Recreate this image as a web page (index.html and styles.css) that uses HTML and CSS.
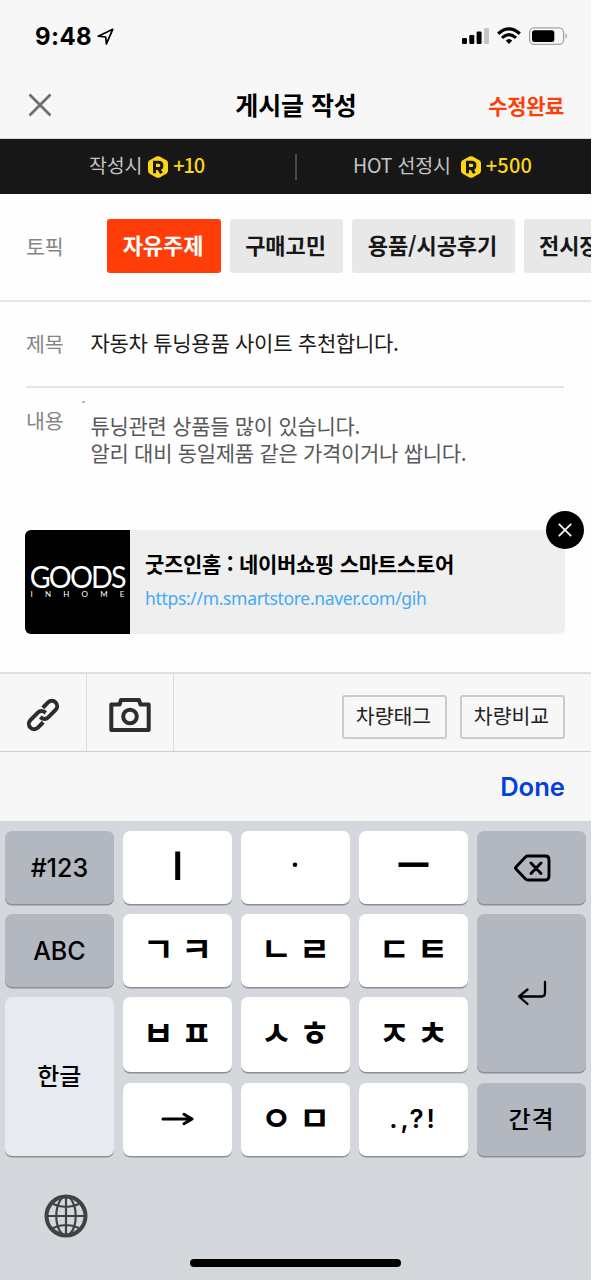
FILE: index.html
```html
<!DOCTYPE html>
<html lang="ko">
<head>
<meta charset="utf-8">
<title>게시글 작성</title>
<link rel="stylesheet" href="styles.css">
</head>
<body>
<div class="screen">
  <header class="top">
    <div class="status">
      <span class="clock">9:48</span>
      <svg class="loc" width="18" height="18" viewBox="0 0 18 18"><path d="M1.200 8.200 15.700 1.300 9.400 15.900 8.700 9Z" fill="none" stroke="#000" stroke-width="1.700" stroke-linejoin="round"/></svg>
      <svg class="indicators" width="108" height="20" viewBox="0 0 108 20">
        <rect x="1" y="11" width="5" height="6" rx="1.2"/><rect x="8.3" y="8" width="5" height="9" rx="1.2"/><rect x="15.600" y="4.500" width="5" height="12.500" rx="1.200"/><rect x="23" y="1" width="5" height="16" rx="1.200" fill="#c5c5c8"/>
        <path d="M37.200 6.800Q48 -3 58.800 6.800" fill="none" stroke="#000" stroke-width="3.300"/>
        <path d="M41 10.800Q48 4.400 55 10.800" fill="none" stroke="#000" stroke-width="3.100"/>
        <path d="M44.700 13.600Q48 10.600 51.300 13.600L48 17Z"/>
        <rect x="68.600" y=".9" width="34" height="16.500" rx="4.500" fill="none" stroke="#a4a4a6" stroke-width="1.300"/>
        <rect x="71" y="3.300" width="22.300" height="11.800" rx="2.500"/>
        <path d="M104.500 6.300Q107.500 9 104.500 12Z" fill="#a4a4a6"/>
      </svg>
    </div>
    <div class="nav">
      <svg class="close" width="24" height="24" viewBox="0 0 24 24"><path d="M1.500 1.500 22.500 22.500M22.500 1.500 1.500 22.500" stroke="#707070" stroke-width="2.800"/></svg>
      <h1 class="title">게시글 작성</h1>
      <span class="submit">수정완료</span>
    </div>
  </header>

  <div class="rewards">
    <div class="reward reward-write"><span>작성시</span>
      <svg width="20" height="22" viewBox="0 0 20 22"><path d="M8.300.6Q10-.3 11.700.6L18.300 4.300Q20 5.300 20 7V15Q20 16.700 18.300 17.700L11.700 21.400Q10 22.300 8.300 21.400L1.700 17.700Q0 16.700 0 15V7Q0 5.300 1.700 4.300Z" fill="#fcd616"/><path d="M6.500 17.300V6.300H10.700Q13.900 6.300 13.900 9.400T10.700 12.500H6.500M10.200 12 13.500 17.300" fill="none" stroke="#171717" stroke-width="3"/></svg>
      <b>+10</b></div>
    <i class="bar"></i>
    <div class="reward reward-hot"><span>HOT 선정시</span>
      <svg width="20" height="22" viewBox="0 0 20 22"><path d="M8.300.6Q10-.3 11.700.6L18.300 4.300Q20 5.300 20 7V15Q20 16.700 18.300 17.700L11.700 21.400Q10 22.300 8.300 21.400L1.700 17.700Q0 16.700 0 15V7Q0 5.300 1.700 4.300Z" fill="#fcd616"/><path d="M6.500 17.300V6.300H10.700Q13.900 6.300 13.900 9.400T10.700 12.500H6.500M10.200 12 13.500 17.300" fill="none" stroke="#171717" stroke-width="3"/></svg>
      <b>+500</b></div>
  </div>

  <section class="topics">
    <span class="label">토픽</span>
    <div class="chips">
      <span class="chip chip-on">자유주제</span><span class="chip">구매고민</span><span class="chip chip-wide">용품/시공후기</span><span class="chip chip-last">전시장</span>
    </div>
  </section>
  <section class="subject"><span class="label">제목</span><span class="subject-text">자동차 튜닝용품 사이트 추천합니다.</span></section>
  <section class="content">
    <span class="label">내용</span>
    <i class="caret"></i>
    <p class="content-text">튜닝관련 상품들 많이 있습니다.<br>알리 대비 동일제품 같은 가격이거나 쌉니다.</p>
  </section>
  <section class="link-card">
    <div class="thumb"><span class="brand">GOODS</span><span class="brand-sub"><i>I</i><i>N</i><i>H</i><i>O</i><i>M</i><i>E</i></span></div>
    <div class="link-info"><strong>굿즈인홈 : 네이버쇼핑 스마트스토어</strong><span class="url">https://m.smartstore.naver.com/gih</span></div>
    <svg class="remove" width="38" height="38" viewBox="0 0 38 38"><circle cx="19" cy="19" r="19"/><path d="M12.800 12.800 25.200 25.200M25.200 12.800 12.800 25.200" stroke="#fff" stroke-width="1.700"/></svg>
  </section>

  <div class="toolbar">
    <div class="tool"><svg width="38" height="38" viewBox="0 0 38 38" fill="none" stroke="#2d2d2d" stroke-width="4"><g transform="rotate(-45 19 19)"><path d="M14 24.300H6.500A5.300 5.300 0 0 1 6.500 13.700H17Q21.800 13.700 22.500 19.500"/><path d="M24 13.700H31.500A5.300 5.300 0 0 1 31.500 24.300H21Q16.200 24.300 15.500 18.500"/></g></svg></div>
    <div class="tool"><svg width="42" height="34" viewBox="0 0 42 34" fill="none" stroke="#2d2d2d" stroke-width="4" stroke-linejoin="round"><path d="M2.300 6.500H10.500L12 2H30L31.500 6.500H39.700V32H2.300Z"/><circle cx="21" cy="18.500" r="6.800"/></svg></div>
    <div class="tool-buttons"><span class="outline">차량태그</span><span class="outline">차량비교</span></div>
  </div>
  <div class="accessory"><span>Done</span></div>

  <div class="keyboard">
    <div class="keys">
      <div class="key dark latin">#123</div>
      <div class="key"><svg width="108" height="73" viewBox="0 0 108 73"><path d="M54.700 20.500V49" stroke="#000" stroke-width="5"/></svg></div>
      <div class="key"><svg width="108" height="73" viewBox="0 0 108 73"><circle cx="54" cy="33.800" r="2.300"/></svg></div>
      <div class="key"><svg width="108" height="73" viewBox="0 0 108 73"><path d="M38.500 33.700H68.500" stroke="#000" stroke-width="4.500"/></svg></div>
      <div class="key dark"><svg width="38" height="28" viewBox="0 0 38 28" fill="none" stroke="#000" stroke-width="2.900" stroke-linejoin="round" stroke-linecap="round"><path d="M15 2H32.500Q36 2 36 6V22Q36 26 32.500 26H15Q13.500 26 12.500 25L3 15Q2 14 3 13L12.500 3Q13.500 2 15 2ZM18 9 28 19.500M28 9 18 19.500"/></svg></div>

      <div class="key dark latin">ABC</div>
      <div class="key jamo"><span>ㄱ</span><span>ㅋ</span></div>
      <div class="key jamo"><span>ㄴ</span><span>ㄹ</span></div>
      <div class="key jamo"><span>ㄷ</span><span>ㅌ</span></div>
      <div class="key dark tall"><svg width="30" height="26" viewBox="0 0 30 26" fill="none" stroke="#000" stroke-width="2.300" stroke-linecap="round" stroke-linejoin="round"><path d="M28 2V13Q28 16.500 24.500 16.500H2M10.500 9.500 2 16.500 10.500 24"/></svg></div>

      <div class="key light tall hangul">한글</div>
      <div class="key jamo"><span>ㅂ</span><span>ㅍ</span></div>
      <div class="key jamo"><span>ㅅ</span><span>ㅎ</span></div>
      <div class="key jamo"><span>ㅈ</span><span>ㅊ</span></div>

      <div class="key"><svg width="34" height="16" viewBox="0 0 34 16" fill="none" stroke="#000" stroke-width="3" stroke-linecap="round" stroke-linejoin="round"><path d="M3 8H31M24 3.300 32 8 24 12.700"/></svg></div>
      <div class="key jamo"><span>ㅇ</span><span>ㅁ</span></div>
      <div class="key punct">.,?!</div>
      <div class="key dark hangul space">간격</div>
    </div>
    <svg class="globe" width="44" height="44" viewBox="0 0 44 44" fill="none" stroke="#404343" stroke-width="2.200"><circle cx="22" cy="22" r="19.500" stroke-width="4"/><ellipse cx="22" cy="22" rx="9.700" ry="19.500"/><path d="M22 3V41M3 22H41M9 10Q22 16 35 10M9 34Q22 28 35 34"/></svg>
    <i class="home"></i>
  </div>
</div>
</body>
</html>
```

FILE: styles.css
```css
* { box-sizing: border-box; }
body { margin: 0; background: #fff; font-family: "Noto Sans CJK KR", sans-serif; }
i { font-style: normal; }
svg { display: block; flex: none; }
.screen { width: 591px; height: 1280px; overflow: hidden; display: flex; flex-direction: column; background: #fefefe; }

.top { height: 139px; background: #f7f7f7; border-bottom: 1px solid #d6d6d6; flex: none; }
.status { height: 73px; display: flex; align-items: center; padding: 0 22px 0 35px; }
.clock { font: 700 24px/30px Inter, sans-serif; letter-spacing: .4px; width: 62px; }
.loc { margin-top: 0; }
.indicators { margin-left: auto; }
.nav { height: 64px; display: grid; grid-template-columns: 1fr auto 1fr; align-items: center; padding: 0 27px 0 28px; }
.title { margin: -3px 0 0; font-size: 25px; line-height: 34px; font-weight: 700; letter-spacing: -.1px; }
.submit { justify-self: end; color: #ff3d08; font-size: 21px; font-weight: 700; line-height: 30px; letter-spacing: -.4px; margin-top: -1px; }

.rewards { height: 55px; flex: none; background: #171717; display: flex; align-items: center; color: #c4c4c6; font-size: 19.500px; }
.reward { display: flex; align-items: center; line-height: 28px; }
.reward span { margin-top: -3px; letter-spacing: -.2px; }
.reward-write { width: 295px; padding-left: 89px; }
.reward-hot { padding-left: 56px; }
.reward svg { margin-left: 6px; }
.reward-hot svg { margin-left: 10px; }
.reward b { color: #fcd616; font: 500 20px/28px "Noto Sans CJK KR", sans-serif; margin: -3px 0 0 5px; letter-spacing: .2px; }
.reward-write b { letter-spacing: -1.200px; }
.bar { width: 2px; height: 26px; background: #4a4a4a; }

.label { color: #858585; font-size: 20.500px; line-height: 30px; width: 80px; flex: none; }
.topics { height: 108px; flex: none; border-bottom: 2px solid #e6e6e6; padding: 25px 0 0 26px; display: flex; overflow: hidden; }
.topics .label { margin-top: 12px; width: 81px; }
.chips { display: flex; gap: 9px; }
.chip { width: 113px; height: 54px; flex: none; border-radius: 3px; background: #e8e8e8; font-size: 22px; font-weight: 700; line-height: 51px; text-align: center; color: #171717; letter-spacing: -.1px; padding-right: 2px; }
.chip-on { width: 114px; background: #ff3d08; color: #fff; }
.chip-wide { width: 163px; }
.chip-last { text-align: left; padding-left: 15px; }
.subject { height: 86px; flex: none; margin: 0 27px 0 26px; border-bottom: 2px solid #e4e4e4; display: flex; padding-top: 26px; }
.subject .label, .content .label { width: 64.500px; }
.subject-text { font-size: 21px; line-height: 30px; color: #1b1b1b; letter-spacing: -.27px; margin-top: -1px; }
.content { height: 142px; flex: none; padding: 18px 0 0 26px; display: flex; position: relative; }
.content .label { margin-top: -1px; }
.content-text { margin: 6px 0 0; font-size: 21px; line-height: 27px; color: #58585a; letter-spacing: -.3px; }
.caret { position: absolute; left: 82px; top: 13px; width: 3px; height: 2px; background: #9cbce0; }

.link-card { height: 104px; flex: none; margin: 0 26px 38px 25px; display: flex; background: #efefef; border-radius: 6px; position: relative; }
.thumb { width: 105px; background: #000; color: #fff; border-radius: 6px 0 0 6px; display: flex; flex-direction: column; align-items: center; padding-top: 32px; }
.brand { font: 400 31.500px/28px Lato, sans-serif; letter-spacing: -2px; transform: scaleX(.91); }
.brand-sub { width: 94px; display: flex; justify-content: space-between; font: 8px/8px Lato, sans-serif; }
.link-info { padding: 18px 0 0 15px; display: flex; flex-direction: column; }
.link-info strong { font-size: 21px; line-height: 30px; font-weight: 700; letter-spacing: -.28px; }
.url { color: #45a9f8; font: 17.500px/28px "Noto Sans", sans-serif; letter-spacing: -.33px; margin-top: 6px; }
.remove { position: absolute; right: -19px; top: -19px; }

.toolbar { height: 80px; flex: none; background: #f7f7f7; border-top: 2px solid #e0e0e0; border-bottom: 1px solid #cfcfcf; display: flex; }
.tool { width: 87px; border-right: 1px solid #dcdcdc; display: flex; align-items: center; justify-content: center; padding-top: 5px; }
.tool-buttons { margin-left: auto; display: flex; gap: 13px; padding: 21px 26px 0 0; }
.outline { width: 105px; height: 44px; border: 2px solid #cbcbcb; border-radius: 3px; font-size: 20.500px; line-height: 37px; text-align: center; color: #222; padding-right: 2px; }
.accessory { height: 69px; flex: none; background: #f7f7f7; display: flex; justify-content: flex-end; align-items: center; padding: 1px 26px 0 0; color: #0340dc; font: 600 25.600px/32px Inter, sans-serif; }

.keyboard { flex: 1; background: #d4d7dc; position: relative; padding: 10px 5px 0; }
.keys { display: grid; grid-template-columns: repeat(5, 1fr); grid-template-rows: 73px 73px 75px 73px; row-gap: 10.200px; column-gap: 9.300px; }
.key { background: #fff; border-radius: 7px; box-shadow: 0 1.500px 0 #8f9094; display: flex; align-items: center; justify-content: center; min-width: 0; min-height: 0; }
.dark { background: #b3b7c0; }
.light { background: #e7eaef; }
.tall { grid-row: span 2; }
.latin { font: 500 25px/30px Inter, sans-serif; }
.hangul { font-size: 24px; font-weight: 500; padding-bottom: 4px; }
.space { letter-spacing: 1px; }
.jamo { font-size: 34px; line-height: 50px; font-weight: 700; gap: 7px; padding-bottom: 5px; }
.punct { font: 600 26px/30px Inter, sans-serif; letter-spacing: 3px; }
.globe { position: absolute; left: 44px; top: 373px; }
.home { position: absolute; left: 190px; top: 438px; width: 211px; height: 8px; border-radius: 4px; background: #000; }
```
